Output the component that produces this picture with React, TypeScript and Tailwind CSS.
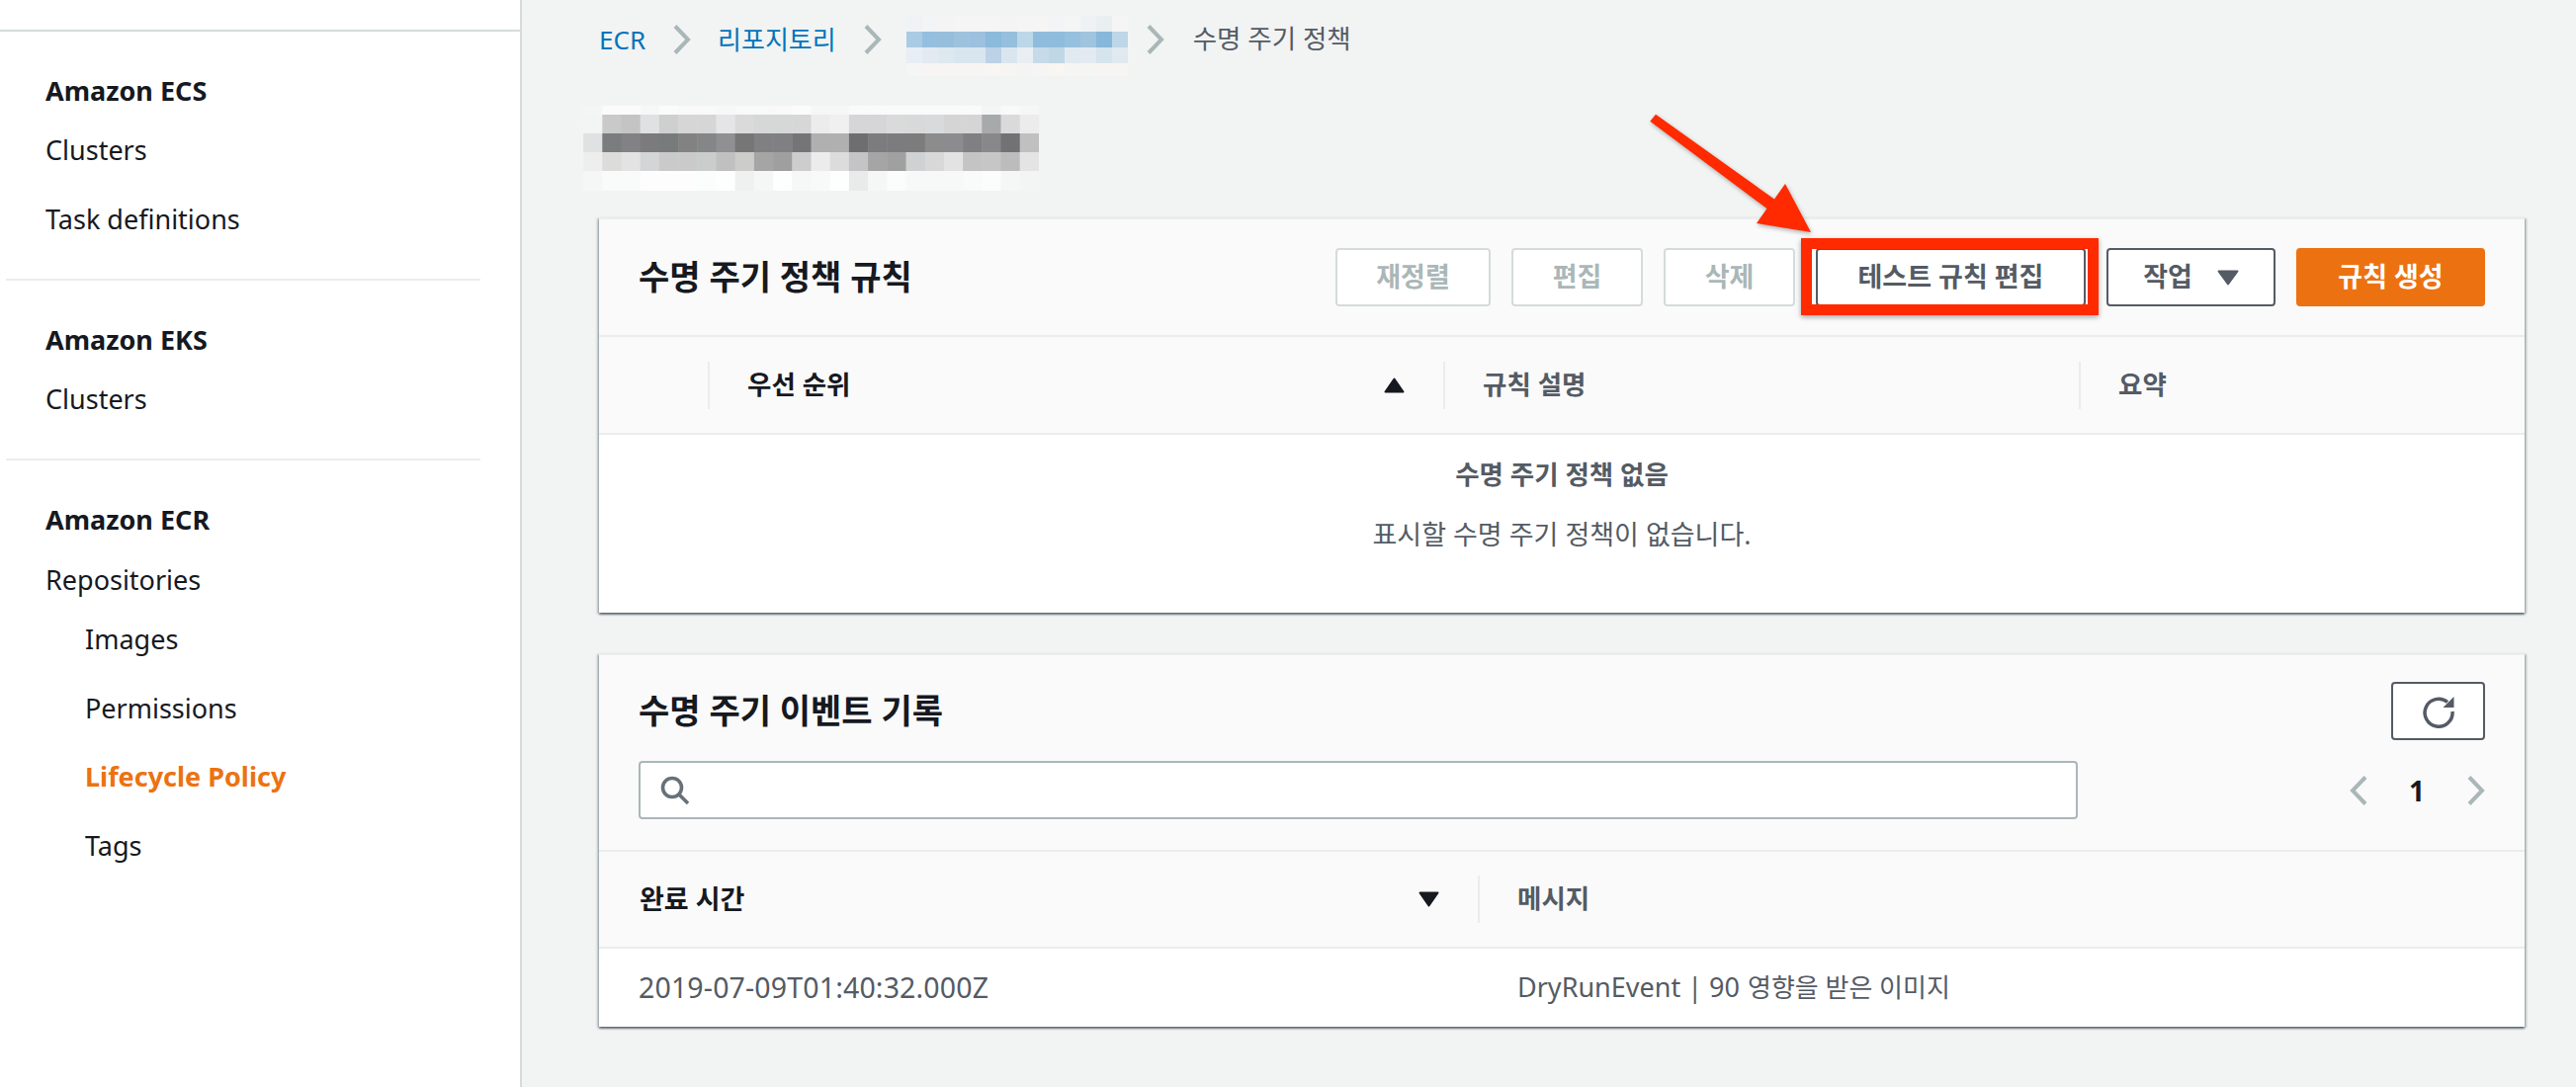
import React from "react";

const titleMosaic = [
  ["#f4f5f5", "#fbfbfb", "#fbfbfb", "#f6f7f7", "#fafbfb", "#f9f9f9", "#f9f9f9", "#f6f7f7", "#f8f9f9", "#f9f9f9", "#f9f9f9", "#fbfbfb", "#f5f6f6", "#f5f6f6", "#f9fafa", "#f9fafa", "#f9fafa", "#f9fafa", "#f9fafa", "#f9fafa", "#f9fafa", "#f4f5f5", "#f9f9f9", "#f5f6f6"],
  ["#f3f4f4", "#c9c9ca", "#c4c4c5", "#e0e1e3", "#cfcfd0", "#d6d6d6", "#d6d6d6", "#e5e5e7", "#d9dad9", "#d6d7d7", "#d6d7d7", "#d6d7d6", "#ececec", "#f0f0f0", "#d6d6d8", "#d6d6d8", "#dadada", "#d8d9da", "#d9dadb", "#d5d5d6", "#d5d5d6", "#a8a9aa", "#d9dad9", "#ececec"],
  ["#e0e1e3", "#7a7c7d", "#828284", "#7b7b7d", "#787b7c", "#828283", "#858688", "#908f92", "#767676", "#808082", "#808082", "#757577", "#b0b0b1", "#b0b0b1", "#6e6e70", "#7c7c7e", "#7c7c7e", "#7c7c7d", "#8c8c8d", "#8c8c8e", "#808082", "#88888a", "#727274", "#c0c0c1"],
  ["#eeeeee", "#dcdcdb", "#e2e3e2", "#d4d5d6", "#cacaca", "#cacaca", "#cbcccc", "#c0c0c1", "#cccdcb", "#a5a5a6", "#9f9fa0", "#cdcdce", "#ececec", "#dcdcdc", "#c4c4c6", "#a5a5a6", "#a0a0a1", "#d0d1d2", "#d8d8d9", "#e2e3e2", "#c4c4c5", "#c6c6c7", "#bcbcbd", "#e4e4e4"],
  ["#f5f6f6", "#f9fafa", "#f9fafa", "#fcfdfc", "#fcfdfc", "#fcfdfc", "#fbfcfc", "#fdfefe", "#eff0f0", "#f5f6f6", "#fdfefe", "#f6f7f7", "#f8f9f9", "#fdfefe", "#e9eaea", "#f5f6f6", "#fbfcfc", "#f7f8f8", "#f7f8f8", "#f7f8f8", "#f9fafa", "#fbfcfc", "#f5f6f6", "#f3f4f4"],
];

const crumbMosaic = [
  ["#eff3f5", "#f2f4f5", "#f4f4f4", "#f5f5f5", "#f5f5f5", "#f5f5f5", "#f4f4f4", "#f5f5f5", "#f5f5f5", "#f2f4f5", "#f4f5f5", "#eff2f4", "#e9eef1", "#f5f5f5"],
  ["#a9cbe3", "#95bfdf", "#97bfdc", "#9dc2dd", "#9cc0de", "#8bbadb", "#95bfdc", "#bdd7e8", "#8fbcdc", "#8fbcdc", "#97c0de", "#a0c4de", "#87b7da", "#bdd6e8"],
  ["#e8eef3", "#e3eaf1", "#dde8ef", "#d9e6ef", "#d9e6ef", "#bcd2e6", "#dae6ef", "#e9eef2", "#c6dae9", "#c0d7e6", "#e2eaf1", "#e3eaf1", "#d6e4ee", "#e0e9f0"],
  ["#f5f5f5", "#f7f4f3", "#f6f5f4", "#f7f5f4", "#f7f5f4", "#f9f5f2", "#f6f5f4", "#f4f4f4", "#f7f5f4", "#f9f5f1", "#f5f5f4", "#f5f5f4", "#f7f5f3", "#f6f5f4"],
];

const titleRows = [9, 19, 19, 19, 20];
const crumbRows = [16, 16, 16, 13];

function Mosaic({ rows, heights, cell, className }: { rows: string[][]; heights: number[]; cell: number; className: string }) {
  let y = 0;
  return (
    <svg className={className} viewBox={`0 0 ${rows[0].length * cell} ${heights.reduce((a, b) => a + b, 0)}`}>
      {rows.map((row, r) => {
        const top = y;
        y += heights[r];
        return row.map((c, i) => <rect key={r + "-" + i} x={i * cell} y={top} width={cell + 0.5} height={heights[r] + 0.5} fill={c} />);
      })}
    </svg>
  );
}

function Chevron({ left, className }: { left?: boolean; className?: string }) {
  return (
    <svg className={className} width="18" height="30" viewBox="0 0 18 30" fill="none" stroke="#aab7b8" strokeWidth="4">
      <polyline points={left ? "16,1.5 3,15 16,28.5" : "2,1.5 15,15 2,28.5"} />
    </svg>
  );
}

function SortArrow({ up }: { up?: boolean }) {
  return (
    <svg width="21" height="16" viewBox="0 0 21 16" fill="#16191f" stroke="#16191f" strokeWidth="2" strokeLinejoin="round">
      <polygon points={up ? "10.5,1.5 19.5,14.5 1.5,14.5" : "1.5,1.5 19.5,1.5 10.5,14.5"} />
    </svg>
  );
}

function SideHead({ children, className }: { children: React.ReactNode; className: string }) {
  return <div className={"flex h-[36px] items-center pl-[46px] text-[27px] font-bold text-[#16191f] " + className}>{children}</div>;
}

function SideItem({ children, className }: { children: React.ReactNode; className: string }) {
  return <div className={"flex h-[36px] items-center text-[27px] " + className}>{children}</div>;
}

function DisabledButton({ children, className }: { children: React.ReactNode; className: string }) {
  return (
    <button className={"flex h-[59px] items-center justify-center rounded-[4px] border-2 border-[#d5dbdb] bg-white text-[27px] font-bold text-[#aab7b8] " + className}>
      {children}
    </button>
  );
}

function Sidebar() {
  return (
    <aside className="w-[528px] shrink-0 border-r-2 border-[#d5dbdb] bg-white">
      <div className="h-[32px] border-b-2 border-[#d5dbdb]" />
      <SideHead className="mt-[42px]">Amazon ECS</SideHead>
      <SideItem className="mt-[24px] pl-[46px] text-[#16191f]">Clusters</SideItem>
      <SideItem className="mt-[34px] pl-[46px] text-[#16191f]">Task definitions</SideItem>
      <div className="mt-[42px] ml-[6px] h-[2px] w-[480px] bg-[#eaeded]" />
      <SideHead className="mt-[42px]">Amazon EKS</SideHead>
      <SideItem className="mt-[24px] pl-[46px] text-[#16191f]">Clusters</SideItem>
      <div className="mt-[42px] ml-[6px] h-[2px] w-[480px] bg-[#eaeded]" />
      <SideHead className="mt-[42px]">Amazon ECR</SideHead>
      <SideItem className="mt-[25px] pl-[46px] text-[#16191f]">Repositories</SideItem>
      <SideItem className="mt-[24px] pl-[86px] text-[#16191f]">Images</SideItem>
      <SideItem className="mt-[34px] pl-[86px] text-[#16191f]">Permissions</SideItem>
      <SideItem className="mt-[33px] pl-[86px] font-bold text-[#ec7211]">Lifecycle Policy</SideItem>
      <SideItem className="mt-[34px] pl-[86px] text-[#16191f]">Tags</SideItem>
    </aside>
  );
}

function HeadCell({ children, dark, sort }: { children: React.ReactNode; dark?: boolean; sort?: "up" | "down" }) {
  return (
    <div className={"flex h-[48px] items-center justify-between border-l-2 border-[#eaeded] pl-[38px] text-[26.5px] font-bold " + (dark ? "text-[#16191f]" : "text-[#545b64]")}>
      <span>{children}</span>
      {sort && (
        <span className="mr-[39px] flex">
          <SortArrow up={sort === "up"} />
        </span>
      )}
    </div>
  );
}

const cardClass = "border-t-2 border-[#eaeded] bg-[#fafafa] shadow-[0_2px_2px_0_rgba(0,28,36,0.5),2px_1px_2px_0_rgba(0,28,36,0.2),-2px_1px_2px_0_rgba(0,28,36,0.2)]";

export default function App() {
  return (
    <div className="relative flex h-[1100px] w-[2606px] overflow-hidden bg-[#f2f3f3] font-['Noto_Sans','Noto_Sans_CJK_KR',sans-serif]">
      <Sidebar />

      <main className="flex-1 pl-[78px] pr-[52px]">
        <nav className="flex h-[80px] items-center text-[26px]">
          <span className="text-[#0073bb]">ECR</span>
          <Chevron className="ml-[28px]" />
          <span className="ml-[27px] text-[#0073bb]">리포지토리</span>
          <Chevron className="ml-[28px]" />
          <Mosaic rows={crumbMosaic} heights={crumbRows} cell={16} className="ml-[25px] mt-[13px] h-[61px] w-[224px]" />
          <Chevron className="ml-[19px]" />
          <span className="ml-[29px] text-[26.5px] text-[#545b64]">수명 주기 정책</span>
        </nav>

        <Mosaic rows={titleMosaic} heights={titleRows} cell={19.2} className="-ml-[16px] mt-[27px] h-[86px] w-[461px]" />

        <section className={"mt-[27px] " + cardClass}>
          <div className="flex h-[119px] items-center justify-between border-b-2 border-[#eaeded] pl-[40px] pr-[40px]">
            <h2 className="text-[34px] font-bold text-[#16191f]">수명 주기 정책 규칙</h2>
            <div className="flex items-center gap-[21px]">
              <DisabledButton className="w-[157px]">재정렬</DisabledButton>
              <DisabledButton className="w-[133px]">편집</DisabledButton>
              <DisabledButton className="w-[133px]">삭제</DisabledButton>
              <button className="relative flex h-[59px] w-[273px] items-center justify-center rounded-[4px] border-2 border-[#545b64] bg-white text-[27px] font-bold text-[#545b64]">
                테스트 규칙 편집
                <span className="absolute -bottom-[11px] -left-[17px] -right-[15px] -top-[12px] border-[11px] border-[#ff2a00] shadow-[0_2px_5px_rgba(0,0,0,0.35)]" />
              </button>
              <button className="flex h-[59px] w-[171px] items-center justify-center gap-[25px] rounded-[4px] border-2 border-[#545b64] bg-white text-[27px] font-bold text-[#545b64]">
                작업
                <svg width="22" height="16" viewBox="0 0 22 16" fill="#545b64" stroke="#545b64" strokeWidth="2" strokeLinejoin="round">
                  <polygon points="1.5,1.5 20.5,1.5 11,14.5" />
                </svg>
              </button>
              <button className="flex h-[59px] w-[191px] items-center justify-center rounded-[4px] bg-[#ec7211] text-[27px] font-bold text-white">규칙 생성</button>
            </div>
          </div>

          <div className="grid h-[99px] grid-cols-[110px_744px_643px_1fr] items-center border-b-2 border-[#eaeded]">
            <div />
            <HeadCell dark sort="up">우선 순위</HeadCell>
            <HeadCell>규칙 설명</HeadCell>
            <HeadCell>요약</HeadCell>
          </div>

          <div className="flex h-[180px] flex-col items-center bg-white pt-[23px] text-[#545b64]">
            <div className="flex h-[36px] items-center text-[26.5px] font-bold">수명 주기 정책 없음</div>
            <div className="mt-[24px] flex h-[36px] items-center text-[27px]">표시할 수명 주기 정책이 없습니다.</div>
          </div>
        </section>

        <section className={"mt-[41px] " + cardClass}>
          <div className="h-[199px] border-b-2 border-[#eaeded] px-[40px] pt-[27px]">
            <div className="flex h-[59px] items-center justify-between">
              <h2 className="text-[34px] font-bold text-[#16191f]">수명 주기 이벤트 기록</h2>
              <button className="flex h-[59px] w-[95px] items-center justify-center rounded-[4px] border-2 border-[#545b64] bg-white">
                <svg width="34" height="34" viewBox="0 0 34 34" fill="none">
                  <path d="M26 7.5A14 14 0 1 0 31 17" stroke="#545b64" strokeWidth="3.5" />
                  <polygon points="32.5,2 32.5,13 21.5,13" fill="#545b64" />
                </svg>
              </button>
            </div>
            <div className="mt-[21px] flex h-[59px] items-center justify-between">
              <div className="flex h-[59px] w-[1456px] items-center rounded-[4px] border-2 border-[#aab7b8] bg-white pl-[20px]">
                <svg width="30" height="30" viewBox="0 0 30 30" fill="none" stroke="#687078" strokeWidth="3.6">
                  <circle cx="12" cy="12" r="9.5" />
                  <line x1="19" y1="19" x2="28" y2="28" />
                </svg>
              </div>
              <div className="flex items-center">
                <Chevron left />
                <span className="ml-[40px] w-[20px] text-center text-[28px] font-bold text-[#16191f]">1</span>
                <Chevron className="ml-[41px]" />
              </div>
            </div>
          </div>

          <div className="grid h-[98px] grid-cols-[889px_1fr] items-center border-b-2 border-[#eaeded]">
            <div className="flex items-center justify-between pl-[41px] pr-[39px] text-[27px] font-bold text-[#16191f]">
              <span>완료 시간</span>
              <SortArrow />
            </div>
            <HeadCell>메시지</HeadCell>
          </div>

          <div className="grid h-[79px] grid-cols-[889px_1fr] items-center bg-white text-[28.5px] text-[#545b64]">
            <div className="pl-[40px] tracking-[0.15px]">2019-07-09T01:40:32.000Z</div>
            <div className="flex items-center gap-[8px] pl-[40px] text-[27px]">
              <span>DryRunEvent | 90</span>
              <span className="text-[26px]">영향을 받은 이미지</span>
            </div>
          </div>
        </section>
      </main>

      <svg className="absolute left-[1660px] top-[110px] drop-shadow-[1px_2px_2px_rgba(0,0,0,0.3)]" width="180" height="130" viewBox="0 0 180 130">
        <polygon points="9.3,12.7 15,5.7 135,91.5 146,76 172,125 117,116 127.5,101" fill="#ff2a00" />
      </svg>
    </div>
  );
}
